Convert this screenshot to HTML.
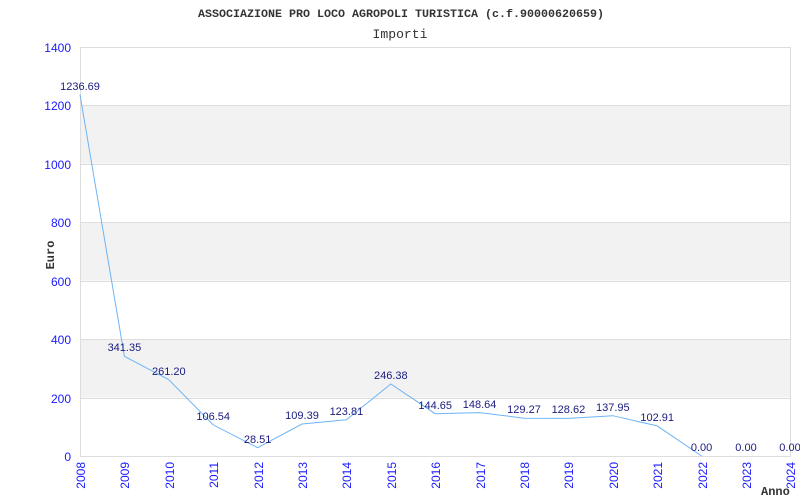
<!DOCTYPE html>
<html><head><meta charset="utf-8"><style>
html,body{margin:0;padding:0;background:#fff;}
svg{display:block;}
</style></head><body>
<svg width="800" height="500" xmlns="http://www.w3.org/2000/svg">
<rect width="800" height="500" fill="#fff"/>
<text x="401" y="17" text-anchor="middle" font-family="Liberation Mono, monospace" font-weight="bold" font-size="11" fill="#333" textLength="406" lengthAdjust="spacingAndGlyphs">ASSOCIAZIONE PRO LOCO AGROPOLI TURISTICA (c.f.90000620659)</text>
<text x="400" y="38" text-anchor="middle" font-family="Liberation Mono, monospace" font-size="13" fill="#333" textLength="55" lengthAdjust="spacingAndGlyphs">Importi</text>
<!-- bands -->
<rect x="80" y="105" width="710" height="58.5" fill="#f2f2f2"/>
<rect x="80" y="222" width="710" height="58.5" fill="#f2f2f2"/>
<rect x="80" y="339" width="710" height="58.5" fill="#f2f2f2"/>
<g stroke="#ddd" stroke-width="1">
<line x1="80" y1="47.5" x2="790" y2="47.5"/>
<line x1="80" y1="105.5" x2="790" y2="105.5"/>
<line x1="80" y1="164.5" x2="790" y2="164.5"/>
<line x1="80" y1="222.5" x2="790" y2="222.5"/>
<line x1="80" y1="281.5" x2="790" y2="281.5"/>
<line x1="80" y1="339.5" x2="790" y2="339.5"/>
<line x1="80" y1="398.5" x2="790" y2="398.5"/>
<line x1="80" y1="456.5" x2="790" y2="456.5"/>
<line x1="80.5" y1="47" x2="80.5" y2="457"/>
<line x1="790.5" y1="47" x2="790.5" y2="457"/>
</g>
<g font-family="Liberation Sans, sans-serif" font-size="12" fill="#1a1aff" text-anchor="end">
<text x="71" y="52">1400</text>
<text x="71" y="110">1200</text>
<text x="71" y="169">1000</text>
<text x="71" y="227">800</text>
<text x="71" y="286">600</text>
<text x="71" y="344">400</text>
<text x="71" y="403">200</text>
<text x="71" y="461">0</text>
</g>
<text transform="translate(54,255) rotate(-90)" text-anchor="middle" font-family="Liberation Mono, monospace" font-weight="bold" font-size="12" fill="#333">Euro</text>
<g font-family="Liberation Sans, sans-serif" font-size="12" fill="#1a1aff" text-anchor="end">
<text transform="translate(85,462) rotate(-90)">2008</text>
<text transform="translate(129,462) rotate(-90)">2009</text>
<text transform="translate(174,462) rotate(-90)">2010</text>
<text transform="translate(218,462) rotate(-90)">2011</text>
<text transform="translate(263,462) rotate(-90)">2012</text>
<text transform="translate(307,462) rotate(-90)">2013</text>
<text transform="translate(351,462) rotate(-90)">2014</text>
<text transform="translate(396,462) rotate(-90)">2015</text>
<text transform="translate(440,462) rotate(-90)">2016</text>
<text transform="translate(485,462) rotate(-90)">2017</text>
<text transform="translate(529,462) rotate(-90)">2018</text>
<text transform="translate(573,462) rotate(-90)">2019</text>
<text transform="translate(618,462) rotate(-90)">2020</text>
<text transform="translate(662,462) rotate(-90)">2021</text>
<text transform="translate(707,462) rotate(-90)">2022</text>
<text transform="translate(751,462) rotate(-90)">2023</text>
<text transform="translate(795,462) rotate(-90)">2024</text>
</g>
<text x="761" y="495" font-family="Liberation Mono, monospace" font-weight="bold" font-size="12" fill="#333">Anno</text>
<polyline fill="none" stroke="#6eb4f5" stroke-width="1" points="80,94.7 124.4,356.3 168.8,379.7 213.2,424.9 257.6,447.7 302,424 346.4,419.8 390.8,384 435.2,413.7 479.6,412.6 524,418.2 568.4,418.4 612.8,415.7 657.2,425.9 701.6,456"/>
<g font-family="Liberation Sans, sans-serif" font-size="11" fill="#1a1a80" text-anchor="middle">
<text x="80" y="90">1236.69</text>
<text x="124.4" y="351">341.35</text>
<text x="168.8" y="375">261.20</text>
<text x="213.2" y="420">106.54</text>
<text x="257.6" y="443">28.51</text>
<text x="302" y="419">109.39</text>
<text x="346.4" y="415">123.81</text>
<text x="390.8" y="379">246.38</text>
<text x="435.2" y="409">144.65</text>
<text x="479.6" y="408">148.64</text>
<text x="524" y="413">129.27</text>
<text x="568.4" y="413">128.62</text>
<text x="612.8" y="411">137.95</text>
<text x="657.2" y="421">102.91</text>
<text x="701.6" y="451">0.00</text>
<text x="746" y="451">0.00</text>
<text x="790" y="451">0.00</text>
</g>
</svg>
</body></html>
